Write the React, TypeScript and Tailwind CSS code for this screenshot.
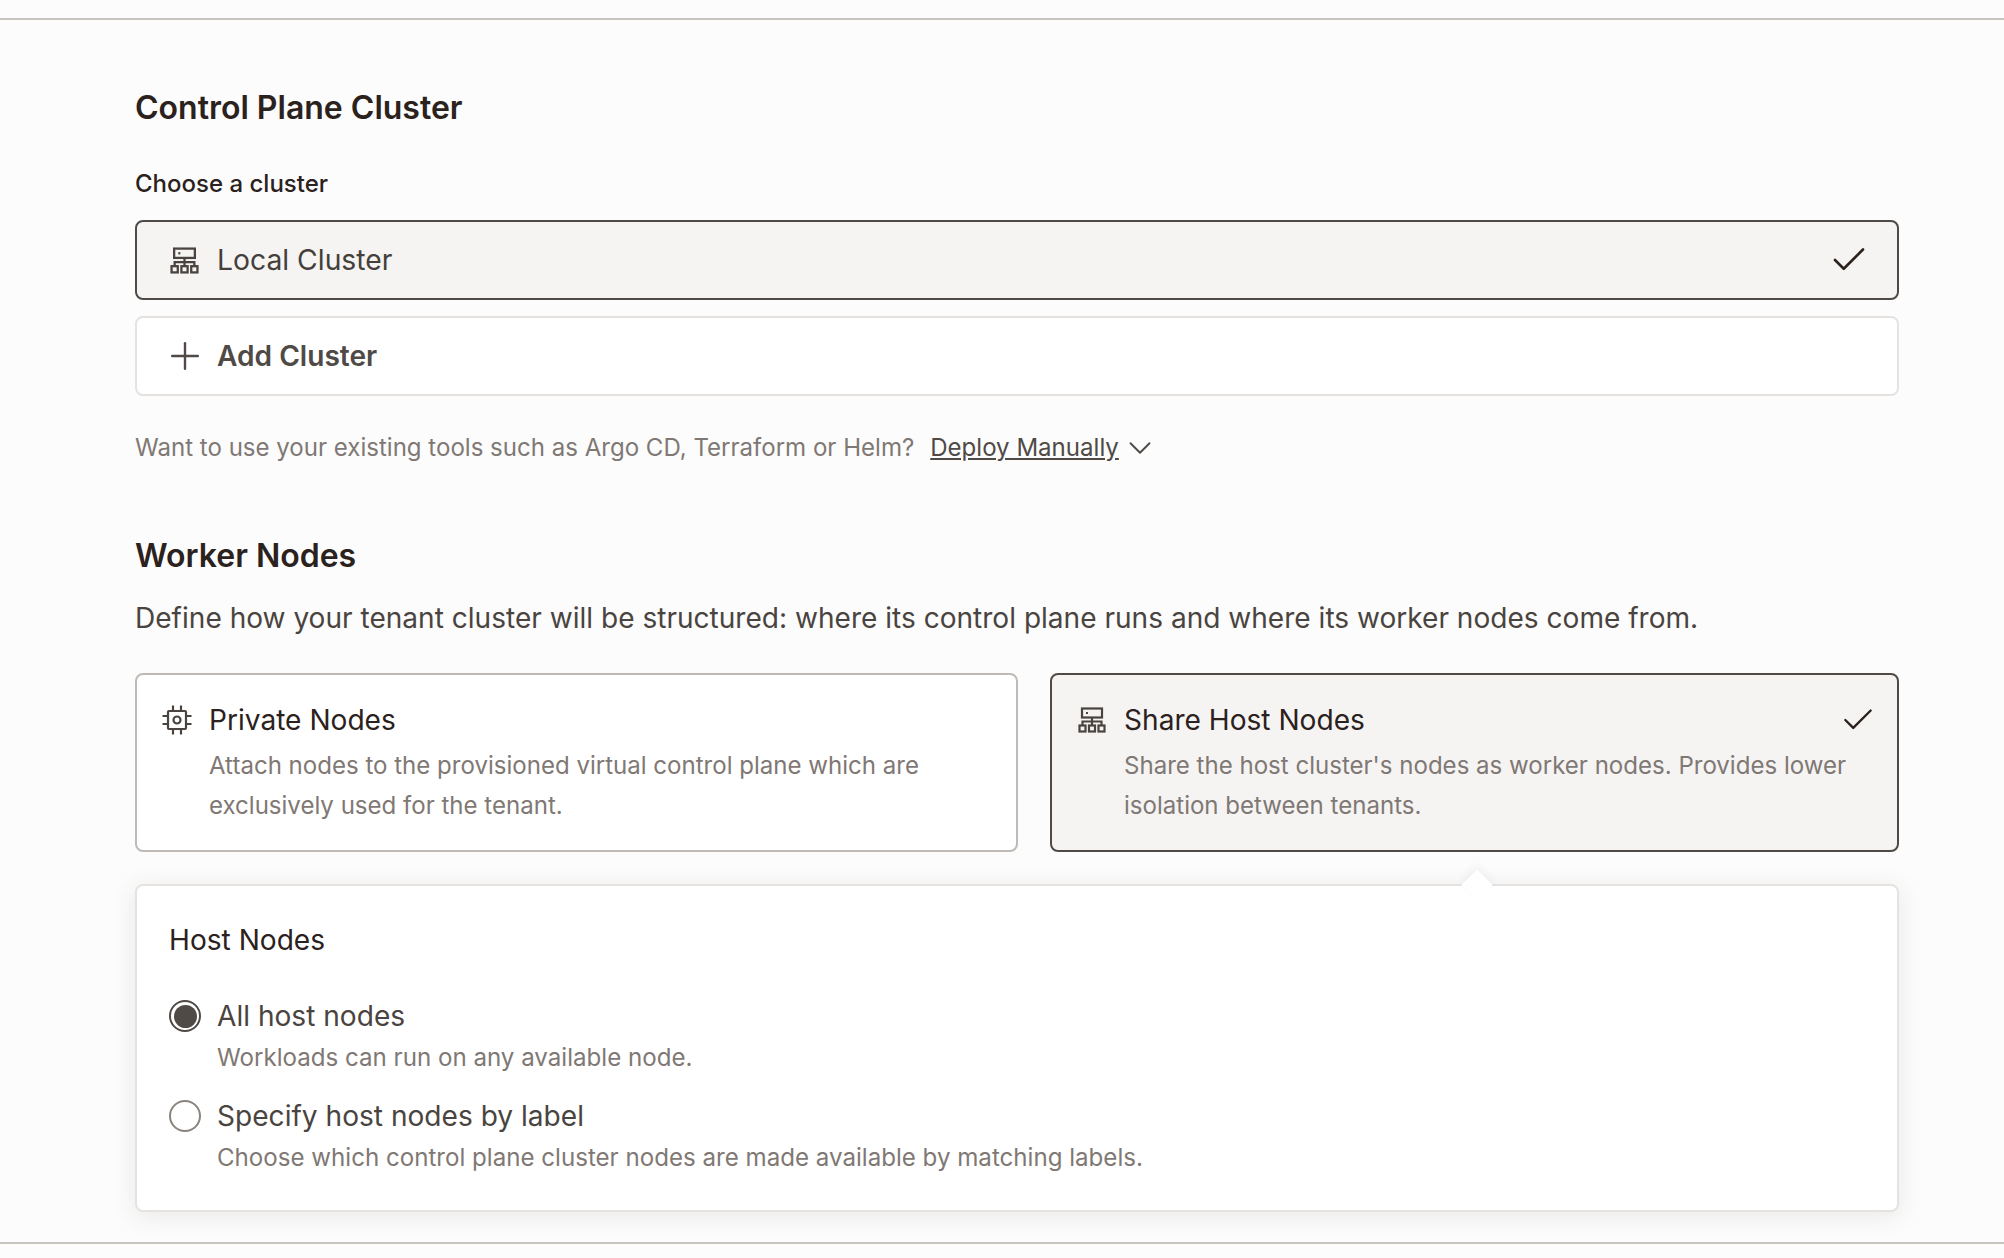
import { FC, ReactNode } from 'react';
import { Check, ChevronDown, Plus } from 'lucide-react';

const NetworkIcon: FC<{ className?: string }> = ({ className }) => (
  <svg viewBox="0 0 28 26" fill="none" stroke="currentColor" strokeWidth="2.2" className={className}>
    <rect x="4" y="1.5" width="20" height="9" />
    <path d="M8 6h2" />
    <path d="M14 10.5v8M4.5 18.5v-4h19v4" />
    <rect x="1.5" y="18.5" width="6" height="6" />
    <rect x="11" y="18.5" width="6" height="6" />
    <rect x="20.5" y="18.5" width="6" height="6" />
  </svg>
);

const ChipIcon: FC<{ className?: string }> = ({ className }) => (
  <svg viewBox="0 0 30 30" fill="none" stroke="currentColor" strokeWidth="2.2" className={className}>
    <rect x="6" y="6" width="18" height="18" rx="1" />
    <circle cx="15" cy="15" r="3.5" />
    <path d="M11 0.5v5M19 0.5v5M11 24.5v5M19 24.5v5M0.5 11h5M0.5 19h5M24.5 11h5M24.5 19h5" />
  </svg>
);

const NodeCard: FC<{ icon: ReactNode; title: string; selected?: boolean; text: ReactNode; iconBox: string }> = ({ icon, title, selected, text, iconBox }) => (
  <div className={`h-[179px] rounded-lg border-2 pt-[23px] flex ${selected ? 'bg-[#f5f4f3] border-[#4f4a46]' : 'bg-white border-[#bfbab6]'}`}>
    <div className={`${iconBox} shrink-0 flex justify-end text-[#4a4440]`}>{icon}</div>
    <div className="flex-1 min-w-0">
      <div className="flex items-center justify-between pr-[20px]">
        <span className="text-[28.1px] leading-[44px] text-[#2b211d]">{title}</span>
        {selected && <Check className="w-[38px] h-[38px] text-[#2b211d]" strokeWidth={1.5} />}
      </div>
      <p className="mt-[4px] text-[24.05px] leading-[40px] text-[#7f7874]">{text}</p>
    </div>
  </div>
);

const RadioRow: FC<{ checked?: boolean; title: string; text: string }> = ({ checked, title, text }) => (
  <div className="flex gap-[16px]">
    <div className="pt-[1px]">
      <div className={`w-[32px] h-[32px] rounded-full border-2 flex items-center justify-center ${checked ? 'border-[#4f4a46]' : 'border-[#8a847f]'}`}>
        {checked && <div className="w-[23px] h-[23px] rounded-full bg-[#4f4a46]" />}
      </div>
    </div>
    <div>
      <div className="text-[28.1px] leading-[34px] text-[#4a4440]">{title}</div>
      <div className="text-[24.12px] leading-[36px] mt-[7px] text-[#7f7874]">{text}</div>
    </div>
  </div>
);

const App: FC = () => {
  return (
    <div className="min-h-screen bg-[#fcfcfc] pt-[18px] font-['Inter',sans-serif]">
      <main className="h-[1226px] border-y-2 border-[#c8c4c0] pl-[135px] pr-[105px] pt-[68px]">
        <h2 className="text-[32px] leading-[40px] font-semibold text-[#2b211d]">Control Plane Cluster</h2>
        <div className="mt-[41px] text-[24px] leading-[30px] font-medium text-[#2b211d]">Choose a cluster</div>

        <div className="mt-[21px] h-[80px] rounded-lg border-2 border-[#4f4a46] bg-[#f5f4f3] flex items-center pl-[33px] pr-[27px]">
          <NetworkIcon className="w-[29px] h-[27px] text-[#4a4440]" />
          <span className="ml-[18px] flex-1 text-[28.3px] text-[#453f3b]">Local Cluster</span>
          <Check className="w-[42px] h-[42px] text-[#2b211d]" strokeWidth={1.5} />
        </div>
        <div className="mt-[16px] h-[80px] rounded-lg border-2 border-[#e6e2df] bg-white flex items-center pl-[26px]">
          <Plus className="w-[44px] h-[44px] text-[#4f4a46]" strokeWidth={1.3} />
          <span className="ml-[10px] text-[28.1px] font-semibold text-[#4f4a46]">Add Cluster</span>
        </div>

        <div className="mt-[36px] h-[32px] flex items-center text-[24.05px] leading-[32px] text-[#7f7874]">
          <span>Want to use your existing tools such as Argo CD, Terraform or Helm?</span>
          <span className="ml-[16px] underline text-[#4f4a46]">Deploy Manually</span>
          <ChevronDown className="ml-[2px] w-[38px] h-[38px] text-[#4f4a46]" strokeWidth={1.2} />
        </div>

        <h2 className="mt-[72px] text-[32px] leading-[40px] font-semibold text-[#2b211d]">Worker Nodes</h2>
        <p className="mt-[24px] text-[28.07px] leading-[36px] text-[#4a4440]">
          Define how your tenant cluster will be structured: where its control plane runs and where its worker nodes come from.
        </p>

        <div className="mt-[37px] grid grid-cols-[883px_849px] gap-x-[32px]">
          <NodeCard
            iconBox="w-[72px] pr-[17px] pt-[7px]"
            icon={<ChipIcon className="w-[30px] h-[30px]" />}
            title="Private Nodes"
            text={<>Attach nodes to the provisioned virtual control plane which are<br />exclusively used for the tenant.</>}
          />
          <NodeCard
            selected
            iconBox="w-[72px] pr-[18px] pt-[9px]"
            icon={<NetworkIcon className="w-[28px] h-[26px]" />}
            title="Share Host Nodes"
            text={<>Share the host cluster's nodes as worker nodes. Provides lower<br />isolation between tenants.</>}
          />
        </div>

        <div className="relative mt-[32px] h-[328px] rounded-lg border-2 border-[#e6e2df] bg-white shadow-[0_4px_24px_rgba(60,50,40,0.1)] pl-[32px] pt-[36px]">
          <div className="absolute left-[1329px] -top-[12px] w-[22px] h-[22px] rotate-45 bg-white shadow-[-3px_-3px_8px_rgba(60,50,40,0.05)]" />
          <div className="text-[28.1px] leading-[36px] text-[#2b211d]">Host Nodes</div>
          <div className="mt-[41px] flex flex-col gap-[23px]">
            <RadioRow checked title="All host nodes" text="Workloads can run on any available node." />
            <RadioRow title="Specify host nodes by label" text="Choose which control plane cluster nodes are made available by matching labels." />
          </div>
        </div>
      </main>
    </div>
  );
};

export default App;
